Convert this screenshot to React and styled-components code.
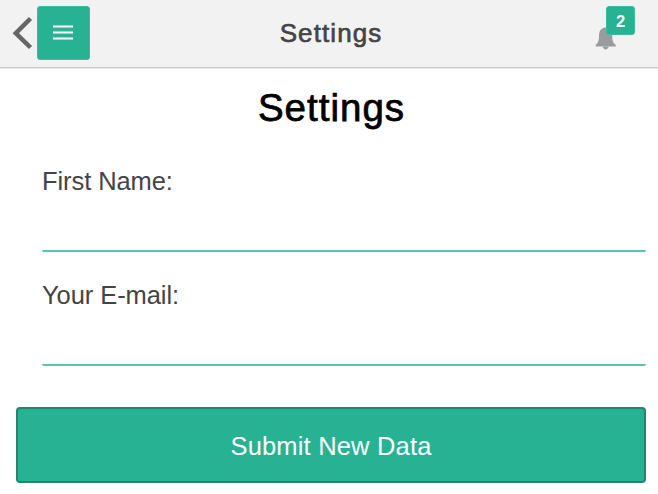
import React from "react";
import styled, { createGlobalStyle } from "styled-components";

const GlobalStyle = createGlobalStyle`
  * { box-sizing: border-box; }
  body {
    margin: 0;
    background: #fff;
    color: #444;
    font-family: "Liberation Sans", Arial, sans-serif;
    overflow: hidden;
  }
`;

const Page = styled.div`
  height: 494px;
`;

const Header = styled.header`
  display: grid;
  grid-template-columns: 1fr auto 1fr;
  height: 68px;
  padding: 6px 23px 0 12px;
  background: #f2f2f2;
  border-bottom: 1px solid #c8c8c8;
  box-shadow: 0 1px 0 #ececec;
`;

const Nav = styled.div`
  display: flex;
  align-items: flex-start;
`;

const BackButton = styled.button`
  width: 25px;
  height: 54px;
  padding: 0;
  border: 0;
  background: none;
  svg { display: block; }
`;

const MenuButton = styled.button`
  display: flex;
  justify-content: center;
  width: 53px;
  height: 54px;
  padding: 18px 0 0;
  border: 1px solid #40b99c;
  border-radius: 3px;
  background: #28b294;
  svg { display: block; margin-left: -1px; }
`;

const HeaderTitle = styled.div`
  padding: 12px 0 0 15px;
  font-size: 26px;
  line-height: 30px;
  letter-spacing: 1.1px;
  -webkit-text-stroke: 0.65px currentColor;
`;

const Notifications = styled.div`
  position: relative;
  justify-self: end;
  width: 40px;
  height: 54px;
`;

const Bell = styled.svg`
  display: block;
  margin-top: 20px;
`;

const Badge = styled.span`
  position: absolute;
  top: 0;
  right: 0;
  width: 29px;
  height: 29px;
  border: 1px solid #40b99c;
  border-radius: 3px;
  background: #28b294;
  color: #fff;
  font-size: 16.5px;
  font-weight: 700;
  line-height: 28px;
  text-align: center;
`;

const Heading = styled.h1`
  margin: 0;
  padding-top: 17px;
  height: 92px;
  color: #000;
  font-size: 38.5px;
  font-weight: 400;
  line-height: 46px;
  letter-spacing: 1px;
  text-align: center;
  text-indent: 5px;
  -webkit-text-stroke: 0.75px currentColor;
`;

const Form = styled.form`
  padding: 0 12px 0 16px;
`;

const Field = styled.label`
  display: block;
  height: 113.5px;
  padding-left: 26px;
`;

const Label = styled.span`
  display: block;
  padding-top: 6px;
  font-size: 25.5px;
  line-height: 30px;
  letter-spacing: -0.08px;
`;

const Input = styled.input`
  display: block;
  width: 100%;
  height: 56px;
  padding: 0;
  border: 0;
  border-bottom: 2px solid #58c5ac;
  border-radius: 2px;
  outline: 0;
  background: transparent;
  font: inherit;
`;

const SubmitButton = styled.button`
  display: block;
  width: 100%;
  height: 76px;
  margin-top: 20px;
  padding: 3px 0 0;
  border: 2px solid #23856e;
  border-radius: 4px;
  background: #28b294;
  color: #fff;
  font-family: inherit;
  font-size: 25.5px;
  letter-spacing: 0.18px;
`;

const fields = [
  { name: "firstName", label: "First Name:", type: "text" },
  { name: "email", label: "Your E-mail:", type: "email" },
];

export default function App() {
  return (
    <Page>
      <GlobalStyle />
      <Header>
        <Nav>
          <BackButton aria-label="Back">
            <svg width="22" height="54" viewBox="0 0 22 54" fill="none" stroke="#666" strokeWidth="4.5">
              <path d="M18.5 12.5 3.8 27.2 18.5 41.5" />
            </svg>
          </BackButton>
          <MenuButton aria-label="Menu">
            <svg width="20" height="15" viewBox="0 0 20 15" stroke="#fff" strokeWidth="2">
              <path d="M0 1.6H20M0 7.6H20M0 13.6H20" />
            </svg>
          </MenuButton>
        </Nav>
        <HeaderTitle>Settings</HeaderTitle>
        <Notifications>
          <Bell width="22" height="24" viewBox="0 0 22 24" fill="#999b9d">
            <path d="M10.5 1.5C5.5 2 4 5.5 4 10.5C4 16 2.5 17 .7 19V20.5H20.8V19C18.6 17 17.3 16 17.3 10.5C17.3 5.5 15.5 2 10.5 1.5ZM7.5 20.3H13.8C13 24.4 8.3 24.4 7.5 20.3Z" />
          </Bell>
          <Badge>2</Badge>
        </Notifications>
      </Header>
      <main>
        <Heading>Settings</Heading>
        <Form onSubmit={(event) => event.preventDefault()}>
          {fields.map(({ name, label, type }) => (
            <Field key={name}>
              <Label>{label}</Label>
              <Input name={name} type={type} />
            </Field>
          ))}
          <SubmitButton type="submit">Submit New Data</SubmitButton>
        </Form>
      </main>
    </Page>
  );
}
